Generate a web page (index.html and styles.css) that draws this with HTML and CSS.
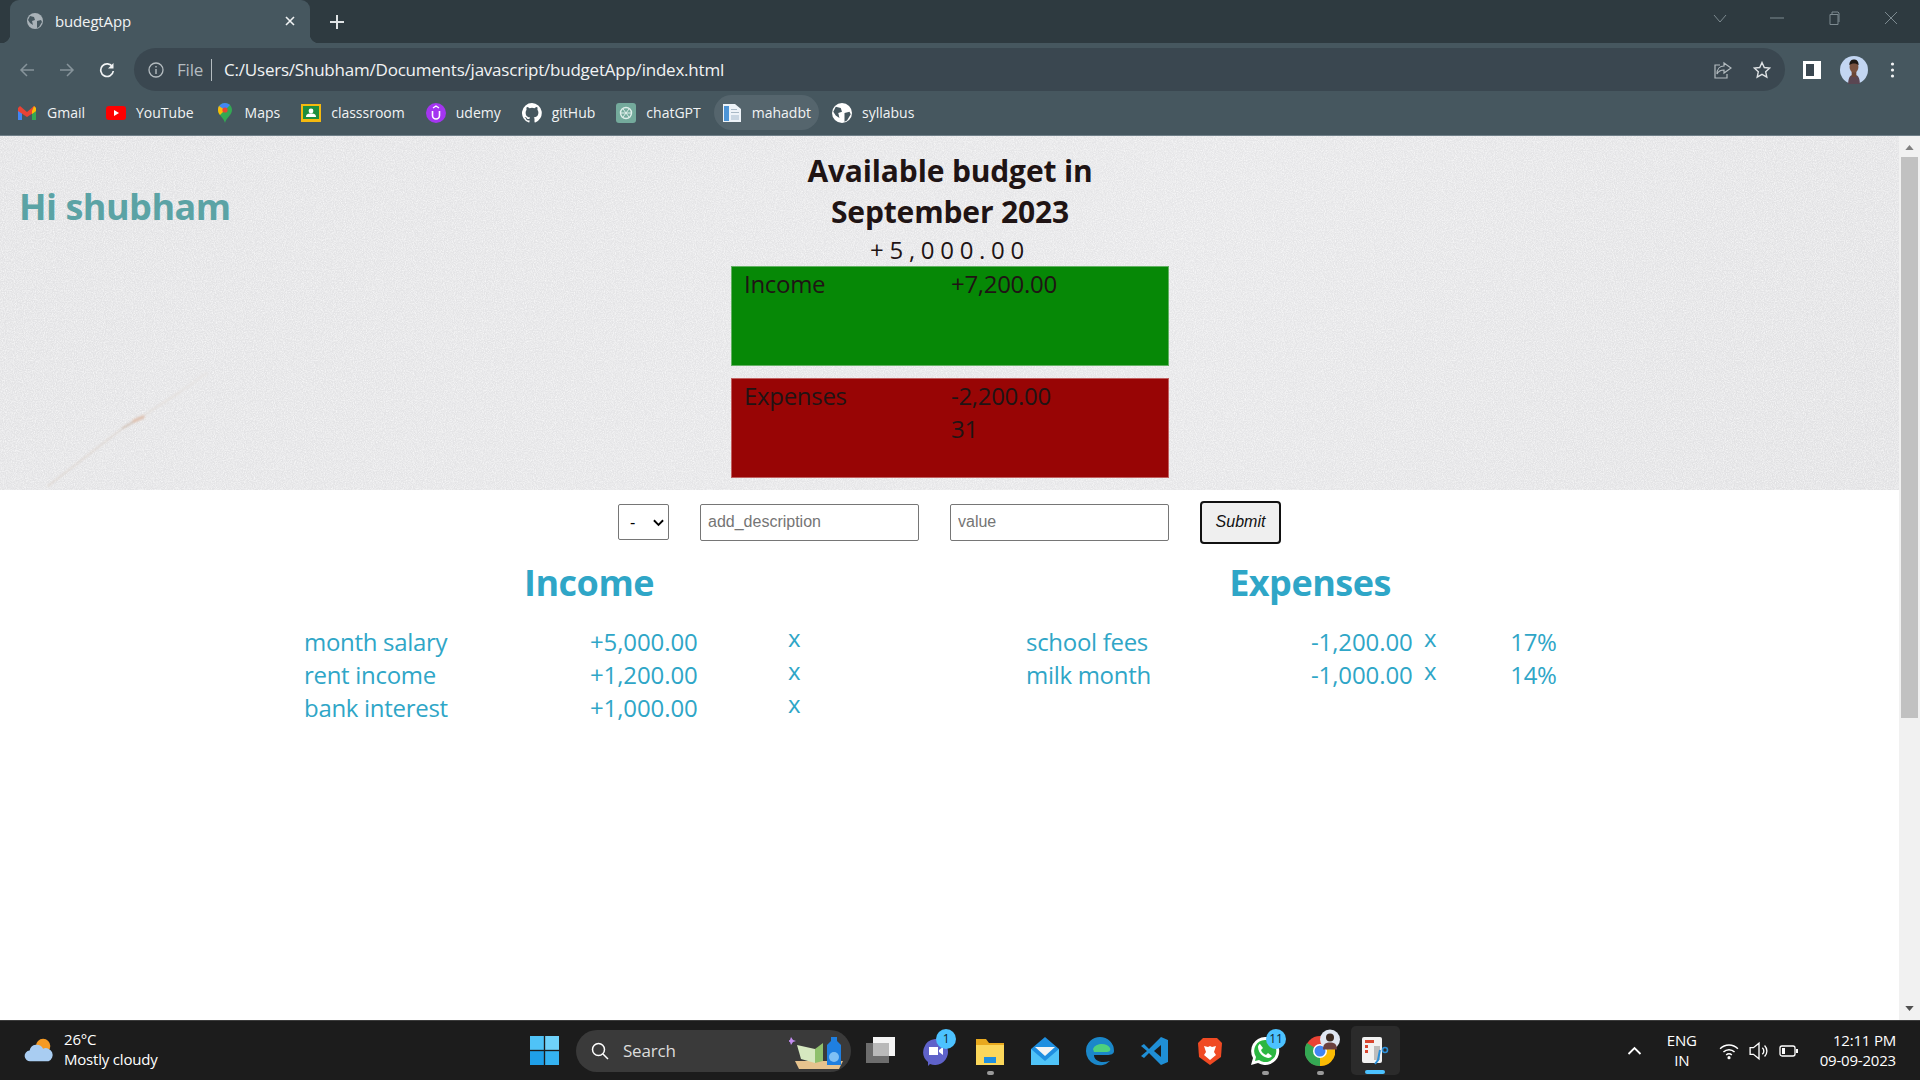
FILE: index.html
```html
<!Doctype html>
<html lang="en">
<head>
	<meta charset="utf-8">
	<title>budegtApp</title>
	<link rel="stylesheet" href="styles.css">
</head>
<body>

<div id="browser">
	<div id="tabstrip">
		<div class="tab">
			<svg class="tab-icon" viewBox="0 0 16 16"><circle cx="8" cy="8" r="8" fill="#a9b2b8"/><path d="M3 3l4 1 1 3-3 1 1 4-3-2-2-3zM10 8l4-1 1 2-3 5-2 1z" fill="#46575f"/></svg>
			<span class="tab-title">budegtApp</span>
			<svg class="tab-close" viewBox="0 0 10 10"><path d="M1 1l8 8M9 1l-8 8" stroke="#f1f3f4" stroke-width="1.6"/></svg>
		</div>
		<svg class="new-tab" viewBox="0 0 14 14"><path d="M7 0v14M0 7h14" stroke="#dfe3e5" stroke-width="2"/></svg>
		<div class="win-controls">
			<svg viewBox="0 0 14 14"><path d="M1 4l6 7 6-7" fill="none" stroke="#7d8a90"/></svg>
			<svg viewBox="0 0 14 14"><path d="M0 7h14" stroke="#7d8a90"/></svg>
			<svg viewBox="0 0 14 14" class="win-max"><path d="M3 3.500h8v10H3zM5 3V1h6l1 1v9" fill="none" stroke="#7d8a90"/></svg>
			<svg viewBox="0 0 14 14"><path d="M1 1l12 12M13 1L1 13" stroke="#7d8a90"/></svg>
		</div>
	</div>

	<div id="toolbar">
		<svg class="nav-icon" viewBox="0 0 16 16"><path d="M15 8H2M8 2L2 8l6 6" fill="none" stroke="#87949b" stroke-width="1.500"/></svg>
		<svg class="nav-icon" viewBox="0 0 16 16"><path d="M1 8h13M8 2l6 6-6 6" fill="none" stroke="#87949b" stroke-width="1.500"/></svg>
		<svg class="nav-icon" viewBox="0 0 16 16"><path d="M13.500 5A6.300 6.300 0 1 0 14.300 9" fill="none" stroke="#f1f3f4" stroke-width="1.700"/><path d="M14.500 1v5.500H9z" fill="#f1f3f4"/></svg>
		<div class="omnibox">
			<svg class="info-icon" viewBox="0 0 16 16"><circle cx="8" cy="8" r="7" fill="none" stroke="#b4bcc0" stroke-width="1.300"/><path d="M8 7v5M8 4v1.600" stroke="#b4bcc0" stroke-width="1.400"/></svg>
			<span class="scheme">File</span>
			<span class="url">C:/Users/Shubham/Documents/javascript/budgetApp/index.html</span>
			<svg class="omni-icon omni-share" viewBox="0 0 18 18"><path d="M10 2l7 5-7 5V9C6 9 4 11 3 13 3 8 6 5 10 5z" fill="none" stroke="#b4bcc0" stroke-width="1.200"/><path d="M6 4H1v13h12v-4" fill="none" stroke="#b4bcc0" stroke-width="1.200"/></svg>
			<svg class="omni-icon" viewBox="0 0 18 18"><path d="M9 1.500l2.300 5 5.400.6-4 3.700 1.100 5.400L9 13.400l-4.800 2.800 1.100-5.400-4-3.700 5.400-.6z" fill="none" stroke="#dfe3e5" stroke-width="1.400"/></svg>
		</div>
		<svg class="side-panel" viewBox="0 0 18 18"><path d="M0 0h18v18H0z" fill="#fff"/><path d="M3 3h8v12H3z" fill="#3a4750"/></svg>
		<svg class="avatar" viewBox="0 0 24 24"><circle cx="12" cy="12" r="12" fill="#c3d6f2"/><path d="M7 24c0-6 2-8 5-8s5 2 5 8z" fill="#5a4652"/><path d="M10 13h4v5h-4z" fill="#6b4636"/><ellipse cx="12" cy="9.500" rx="3.800" ry="4.800" fill="#7a5240"/><path d="M8 8c0-4 2-5 4-5s4 1 4 5c-2-2-6-2-8 0z" fill="#1f1814"/></svg>
		<svg class="menu-dots" viewBox="0 0 4 16"><circle cx="2" cy="2" r="1.600" fill="#f1f3f4"/><circle cx="2" cy="8" r="1.600" fill="#f1f3f4"/><circle cx="2" cy="14" r="1.600" fill="#f1f3f4"/></svg>
	</div>

	<div id="bookmarks">
		<div class="bm">
			<svg viewBox="0 0 20 20"><path d="M1 5v12h4V8z" fill="#4285f4"/><path d="M19 5v12h-4V8z" fill="#34a853"/><path d="M1 5l2-2 7 6 7-6 2 2v3l-9 6-9-6z" fill="#ea4335"/><path d="M15 8l2-5 2 2v3l-4 3z" fill="#fbbc04"/></svg>
			<span>Gmail</span>
		</div>
		<div class="bm">
			<svg viewBox="0 0 20 20"><rect width="20" height="14" y="3" rx="3" fill="#f00"/><path d="M8 7l5 3-5 3z" fill="#fff"/></svg>
			<span>YouTube</span>
		</div>
		<div class="bm">
			<svg viewBox="0 0 16 20"><path d="M8 0c4 0 7 3 7 7 0 5-6 8-7 13C7 15 1 12 1 7c0-4 3-7 7-7z" fill="#34a853"/><path d="M8 0c2 0 4 1 5 2L8 7H1c0-4 3-7 7-7z" fill="#4285f4"/><path d="M2 3l6 4-5 5C2 11 1 9 1 7c0-2 .4-3 1-4z" fill="#fbbc04"/><circle cx="8" cy="7" r="2.600" fill="#ea4335"/></svg>
			<span>Maps</span>
		</div>
		<div class="bm">
			<svg viewBox="0 0 20 20"><rect width="20" height="18" y="1" fill="#f5b90f"/><rect x="2" y="3" width="16" height="13" fill="#1e8e3e"/><circle cx="10" cy="8" r="2.400" fill="#fff"/><path d="M5 14c0-3 2-3.500 5-3.500s5 .5 5 3.500z" fill="#fff"/></svg>
			<span>classsroom</span>
		</div>
		<div class="bm">
			<svg viewBox="0 0 20 20"><circle cx="10" cy="10" r="10" fill="#a435f0"/><path d="M6.500 8v4.500a3.500 3.500 0 0 0 7 0V8" fill="none" stroke="#fff" stroke-width="1.600"/><path d="M7 5l3-2 3 2" fill="none" stroke="#fff" stroke-width="1.400"/></svg>
			<span>udemy</span>
		</div>
		<div class="bm">
			<svg viewBox="0 0 16 16"><path fill="#fff" d="M8 0a8 8 0 0 0-2.500 15.600c.4.100.5-.2.500-.4v-1.400c-2.200.5-2.700-1-2.700-1-.4-.9-.9-1.200-.9-1.200-.7-.5.100-.5.100-.5.800.100 1.200.8 1.200.8.700 1.200 1.900.9 2.300.7.100-.5.300-.9.500-1.100-1.800-.2-3.600-.9-3.600-4 0-.9.300-1.600.8-2.100-.1-.2-.4-1 .1-2.100 0 0 .7-.2 2.200.8a7.600 7.600 0 0 1 4 0c1.500-1 2.200-.8 2.200-.8.400 1.100.2 1.900.1 2.100.5.600.8 1.300.8 2.100 0 3.100-1.900 3.700-3.700 3.900.3.300.6.800.6 1.500v2.200c0 .2.100.5.600.4A8 8 0 0 0 8 0z"/></svg>
			<span>gitHub</span>
		</div>
		<div class="bm">
			<svg viewBox="0 0 20 20"><rect width="20" height="20" rx="3" fill="#74aa9c"/><circle cx="10" cy="10" r="5.500" fill="none" stroke="#dfeeea" stroke-width="1.400"/><path d="M7 6l6 8M13 6l-6 8M4.500 10h11" stroke="#dfeeea"/></svg>
			<span>chatGPT</span>
		</div>
		<div class="bm bm-active">
			<svg viewBox="0 0 20 20"><path d="M1 1h12l6 5v13H1z" fill="#eef3f8"/><path d="M2 3h5v15H2z" fill="#4d94d6"/><path d="M9 12h8v5H9z" fill="#c9d6e2"/><path d="M9 6h6v1H9zM9 9h8v1H9z" fill="#a9b9c6"/></svg>
			<span>mahadbt</span>
		</div>
		<div class="bm">
			<svg viewBox="0 0 16 16"><circle cx="8" cy="8" r="8" fill="#fff"/><path d="M3 3l4 1 1 3-3 1 1 4-3-2-2-3zM10 8l4-1 1 2-3 5-2 1z" fill="#46575f"/></svg>
			<span>syllabus</span>
		</div>
	</div>
</div>

<div id="viewport">
	<div id="page">
		<div id="hero">
			<svg class="marble">
				<defs>
					<filter id="grain"><feTurbulence type="fractalNoise" baseFrequency="0.9" numOctaves="2" seed="4"/><feColorMatrix values="0 0 0 0 1  0 0 0 0 1  0 0 0 0 1  1.300 0 0 0 -0.450"/></filter>
					<filter id="soft"><feGaussianBlur stdDeviation="0.800"/></filter>
				</defs>
				<rect width="100%" height="100%" filter="url(#grain)"/>
				<g filter="url(#soft)" fill="none" stroke-linecap="round">
					<path d="M48 350L123 292" stroke="#dcd3cc" stroke-width="1.300"/>
					<path d="M123 292L140 282" stroke="#cdbbae" stroke-width="1.600"/>
					<path d="M140 282L180 256" stroke="#e3deda" stroke-width="1.500"/>
					<path d="M180 256L207 237" stroke="#e6e3e2" stroke-width="2"/>
					<path d="M134 285L143 281" stroke="#dec1b0" stroke-width="3.500"/>
				</g>
			</svg>
			<h1 class="greeting">Hi shubham</h1>
			<div class="budget">
				<h2 class="budget-title">Available budget in<br>September 2023</h2>
				<div class="budget-value">+5,000.00</div>
				<div class="summary summary-income">
					<span>Income</span>
					<span>+7,200.00</span>
				</div>
				<div class="summary summary-expense">
					<span>Expenses</span>
					<span>-2,200.00<br>31</span>
				</div>
			</div>
		</div>

		<form class="add-form">
			<select class="add-type"><option>-</option></select>
			<input class="add-field" type="text" placeholder="add_description">
			<input class="add-field" type="text" placeholder="value">
			<button class="add-btn" type="button">Submit</button>
		</form>

		<div class="lists">
			<div class="list list-income">
				<h2>Income</h2>
				<div class="row"><span class="desc">month salary</span><span class="amt">+5,000.00</span><span class="del">x</span></div>
				<div class="row"><span class="desc">rent income</span><span class="amt">+1,200.00</span><span class="del">x</span></div>
				<div class="row"><span class="desc">bank interest</span><span class="amt">+1,000.00</span><span class="del">x</span></div>
			</div>
			<div class="list list-expense">
				<h2>Expenses</h2>
				<div class="row"><span class="desc">school fees</span><span class="amt">-1,200.00</span><span class="del">x</span><span class="pct">17%</span></div>
				<div class="row"><span class="desc">milk month</span><span class="amt">-1,000.00</span><span class="del">x</span><span class="pct">14%</span></div>
			</div>
		</div>
	</div>
	<div id="scrollbar">
		<svg viewBox="0 0 10 6" class="arrow"><path d="M5 0l5 6H0z" fill="#808080"/></svg>
		<div class="thumb"></div>
		<svg viewBox="0 0 10 6" class="arrow"><path d="M0 0h10L5 6z" fill="#505050"/></svg>
	</div>
</div>

<div id="taskbar">
	<div class="weather">
		<svg viewBox="0 0 34 30"><circle cx="21" cy="10" r="8" fill="#f59a23"/><path d="M7 27a6 6 0 0 1-1-12 8 8 0 0 1 15-2 7 7 0 0 1 6 14z" fill="#a9cdf2"/></svg>
		<div class="weather-text"><span>26°C</span><span>Mostly cloudy</span></div>
	</div>
	<div class="task-center">
		<svg class="win-logo" viewBox="0 0 30 30"><path d="M0 0h14.300v14.300H0z" fill="#4fc3f7"/><path d="M15.700 0H30v14.300H15.700z" fill="#6fd2fa"/><path d="M0 15.700h14.300V30H0z" fill="#1f9fe8"/><path d="M15.700 15.700H30V30H15.700z" fill="#35b2f0"/></svg>
		<div class="search">
			<svg viewBox="0 0 18 18"><circle cx="7.500" cy="7.500" r="6" fill="none" stroke="#fff" stroke-width="1.500"/><path d="M12 12l5 5" stroke="#fff" stroke-width="1.500"/></svg>
			<span>Search</span>
			<svg class="search-art" viewBox="0 0 60 36"><path d="M6 28h48l-4 8H10z" fill="#e7c38e"/><path d="M8 12l18 4v14L12 26z" fill="#d6e8c0"/><path d="M26 16l8-6v18l-8 2z" fill="#8fc06c"/><path d="M42 4h6v4l4 4v20H38V12l4-4z" fill="#1f7fe0"/><circle cx="45" cy="24" r="5" fill="#7fc0f5"/><path d="M2 4l2 3 3 1-3 1-2 3-1-3-3-1 3-1z" fill="#c38cf0"/></svg>
		</div>
		<svg class="task-icon task-first" viewBox="0 0 30 30"><rect x="8" y="1" width="22" height="19" fill="#f4f4f4"/><rect x="1" y="7" width="23" height="20" fill="#6d6d6d"/><rect x="8" y="7" width="16" height="13" fill="#b9b9b9"/></svg>
		<div class="task-slot">
			<svg class="task-icon" viewBox="0 0 30 30"><path d="M15 3a13 13 0 1 1-5 25l-2 2v-4A13 13 0 0 1 15 3z" fill="#5f62c9"/><path d="M9 11h9v8H9zM19 14l4-3v8l-4-3z" fill="#fff"/></svg>
			<span class="badge">1</span>
		</div>
		<div class="task-slot">
			<svg class="task-icon" viewBox="0 0 30 30"><path d="M1 3h10l3 4h15v5H1z" fill="#e8a91e"/><path d="M1 9h28v20H1z" fill="#fbd75b"/><path d="M9 21h12v6H9z" fill="#1f8fe0"/></svg>
			<span class="pip"></span>
		</div>
		<svg class="task-icon" viewBox="0 0 30 30"><path d="M15 1l14 12v16H1V13z" fill="#1f8fe0"/><path d="M1 13l14 12 14-12v16H1z" fill="#4fc3f7"/><path d="M5 11h20l-10 9z" fill="#f4f4f4"/></svg>
		<svg class="task-icon" viewBox="0 0 30 30"><path d="M15 1a14 14 0 0 1 14 14c0 3-3 4-7 4H9c0 5 6 9 16 6a14 14 0 0 1-24-10A14 14 0 0 1 15 1z" fill="#1b87c9"/><path d="M8 13c2-6 14-7 17-1 1 3-1 4-4 4H9z" fill="#4ed07e"/></svg>
		<svg class="task-icon" viewBox="0 0 30 30"><path d="M21 1l7 3v22l-7 3L9 17l-5 5-3-2 6-5-6-5 3-2 5 5z" fill="#1f8fd6"/><path d="M21 9l-7 6 7 6z" fill="#1c1c1c"/></svg>
		<svg class="task-icon" viewBox="0 0 30 30"><path d="M8 2h14l5 5-1 14-11 8-11-8L3 7z" fill="#f04a23"/><path d="M9 10l4 1 2-1 2 1 4-1-2 6 2 3-6 5-6-5 2-3z" fill="#fff"/></svg>
		<div class="task-slot">
			<svg class="task-icon" viewBox="0 0 30 30"><path d="M15 1a14 14 0 1 1-7 26l-7 2 2-7A14 14 0 0 1 15 1z" fill="#fff"/><path d="M15 4a11 11 0 1 1-6 20l-4 1 1-4A11 11 0 0 1 15 4z" fill="#2bb741"/><path d="M10 8l3 4-2 2c1 3 3 4 5 5l2-2 4 3c-2 3-6 2-9 0s-5-6-5-9c0-1 1-3 2-3z" fill="#fff"/></svg>
			<span class="badge">11</span>
			<span class="pip"></span>
		</div>
		<div class="task-slot">
			<svg class="task-icon" viewBox="0 0 30 30"><circle cx="15" cy="15" r="15" fill="#ea4335"/><path d="M15 15L2 7A15 15 0 0 0 15 30z" fill="#34a853"/><path d="M15 15l13-8a15 15 0 0 1-13 23z" fill="#fbbc04"/><circle cx="15" cy="15" r="7" fill="#fff"/><circle cx="15" cy="15" r="5.500" fill="#4285f4"/></svg>
			<svg class="chrome-avatar" viewBox="0 0 20 20"><circle cx="10" cy="10" r="10" fill="#dfe6f2"/><circle cx="10" cy="8" r="4" fill="#3a2a22"/><path d="M3 20c0-6 3-7 7-7s7 1 7 7z" fill="#6b4040"/></svg>
			<span class="pip"></span>
		</div>
		<div class="task-slot task-active">
			<svg class="task-icon" viewBox="0 0 30 30"><rect x="2" y="1" width="20" height="26" rx="2" fill="#f2f2f2"/><path d="M5 4h9v3H5zM5 9h3v3H5zM5 14h3v3H5z" fill="#d9452f"/><path d="M14 10h6v14h-6z" fill="#bdbdbd"/><path d="M20 14l-2 10-3 4" fill="none" stroke="#2a8fd8" stroke-width="2"/><circle cx="25" cy="14" r="2.500" fill="none" stroke="#2a8fd8" stroke-width="1.600"/></svg>
			<span class="pip pip-active"></span>
		</div>
	</div>
	<div class="tray">
		<svg class="tray-up" viewBox="0 0 14 9"><path d="M1 8l6-6 6 6" fill="none" stroke="#fff" stroke-width="1.800"/></svg>
		<div class="lang"><span>ENG</span><span>IN</span></div>
		<svg class="tray-icon" viewBox="0 0 18 18"><path d="M1 7a11 11 0 0 1 16 0M4 10a7 7 0 0 1 10 0M6.500 12.500a3.500 3.500 0 0 1 5 0" fill="none" stroke="#fff" stroke-width="1.300"/><circle cx="9" cy="15" r="1.400" fill="#fff"/></svg>
		<svg class="tray-icon" viewBox="0 0 18 18"><path d="M1 6h3l5-4v14l-5-4H1z" fill="none" stroke="#fff" stroke-width="1.200"/><path d="M12 6a4 4 0 0 1 0 6M14 4a7 7 0 0 1 0 10" fill="none" stroke="#fff" stroke-width="1.200"/></svg>
		<svg class="tray-icon" viewBox="0 0 20 18"><rect x="1" y="4" width="15" height="10" rx="2" fill="none" stroke="#fff" stroke-width="1.300"/><rect x="3" y="6" width="3" height="6" fill="#fff"/><path d="M18 7v4" stroke="#fff" stroke-width="2"/></svg>
		<div class="clock"><span>12:11 PM</span><span>09-09-2023</span></div>
	</div>
</div>

</body>
</html>
```

FILE: styles.css
```css
html, body {
	margin: 0;
	height: 1080px;
	overflow: hidden;
	background: #fff;
}

body {
	display: flex;
	flex-direction: column;
	font-family: "Open Sans", "Noto Sans", sans-serif;
}

/* browser chrome */

#browser {
	flex: none;
	color: #f1f3f4;
}

#tabstrip {
	height: 43px;
	background: #2e3a40;
	display: flex;
	align-items: flex-end;
	padding-left: 10px;
}

.tab {
	position: relative;
	width: 300px;
	height: 43px;
	box-sizing: border-box;
	background: #46575f;
	border-radius: 9px 9px 0 0;
	display: flex;
	align-items: center;
	padding: 0 15px 2px 17px;
	gap: 12px;
	font-size: 15px;
	letter-spacing: -0.15px;
}

.tab:before, .tab:after {
	content: "";
	position: absolute;
	bottom: 0;
	width: 9px;
	height: 9px;
}

.tab:before {
	left: -9px;
	background: radial-gradient(circle at 0 0, #2e3a40 9px, #46575f 9.500px);
}

.tab:after {
	right: -9px;
	background: radial-gradient(circle at 100% 0, #2e3a40 9px, #46575f 9.500px);
}

.tab-icon {
	width: 16px;
	height: 16px;
}

.tab-title {
	flex: 1;
}

.tab-close {
	width: 10px;
	height: 10px;
}

.new-tab {
	width: 14px;
	height: 14px;
	margin: 0 0 14px 20px;
}

.win-controls {
	margin-left: auto;
	height: 43px;
	display: flex;
	align-items: center;
	gap: 43px;
	padding-right: 22px;
}

.win-controls svg {
	width: 14px;
	height: 14px;
	margin-bottom: 7px;
}

#toolbar {
	height: 48px;
	box-sizing: border-box;
	background: #46575f;
	display: flex;
	align-items: center;
	padding: 5px 0 0 19px;
}

.nav-icon {
	width: 16px;
	height: 16px;
	margin-right: 24px;
}

.nav-icon:nth-child(3) {
	margin-right: 19px;
}

.omnibox {
	width: 1651px;
	height: 43px;
	box-sizing: border-box;
	background: #3a4750;
	border-radius: 22px;
	display: flex;
	align-items: center;
	padding: 0 14px 0 14px;
}

.info-icon {
	width: 16px;
	height: 16px;
	margin-right: 13px;
}

.scheme {
	color: #b4bcc0;
	font-size: 17px;
	letter-spacing: -0.2px;
	padding-right: 8px;
	border-right: 1px solid #b4bcc0;
	margin-right: 12px;
	line-height: 22px;
}

.url {
	flex: 1;
	font-size: 17px;
	letter-spacing: -0.22px;
}

.omni-icon {
	width: 18px;
	height: 18px;
	margin-left: 22px;
}

.omni-share {
	margin-right: -1px;
}

.side-panel {
	width: 18px;
	height: 18px;
	margin-left: 18px;
}

.avatar {
	width: 28px;
	height: 28px;
	margin-left: 19px;
}

.menu-dots {
	width: 5px;
	height: 16px;
	margin-left: 22px;
}

#bookmarks {
	height: 45px;
	box-sizing: border-box;
	background: #46575f;
	border-bottom: 1px solid #6f7f88;
	display: flex;
	align-items: center;
	gap: 5px;
	padding: 0 0 1px 9px;
}

.bm {
	height: 35px;
	box-sizing: border-box;
	display: flex;
	align-items: center;
	gap: 10px;
	padding: 0 8px;
	border-radius: 18px;
	font-size: 14px;
}

.bm span {
	margin-top: -1px;
}

.bm svg {
	width: 20px;
	height: 20px;
}

.bm-active {
	background: #55656d;
}

/* page */

#viewport {
	flex: 1;
	display: flex;
	min-height: 0;
}

#page {
	flex: 1;
	min-width: 0;
}

#hero {
	position: relative;
	height: 354px;
	background: linear-gradient(120deg, #e2e2e4, #e6e6e8 60%, #e1e1e3);
	display: grid;
	grid-template-columns: 731px 438px 1fr;
	justify-items: start;
}

.marble {
	position: absolute;
	left: 0;
	top: 0;
	width: 100%;
	height: 100%;
}

.greeting {
	position: relative;
	margin: 46px 0 0 19px;
	font-size: 36px;
	line-height: 50px;
	color: #5ba3a5;
	letter-spacing: -0.5px;
	font-weight: 700;
}

.budget {
	position: relative;
	grid-column: 2;
	width: 100%;
	text-align: center;
	color: #1f1414;
}

.budget-title {
	margin: 14px 0 0;
	font-size: 30px;
	line-height: 41px;
	letter-spacing: -0.15px;
	font-weight: 700;
}

.budget-value {
	margin-top: 2px;
	font-size: 24px;
	line-height: 32px;
	letter-spacing: 5.700px;
}

.summary {
	height: 100px;
	box-sizing: border-box;
	display: grid;
	grid-template-columns: 207px 1fr;
	padding-left: 12px;
	margin-bottom: 12px;
	text-align: left;
	font-size: 24px;
	line-height: 33px;
	letter-spacing: -0.3px;
	border: 1px solid #63b063;
}

.summary-income {
	background: #068806;
}

.summary-expense {
	background: #980505;
	border-color: #c06060;
	margin-bottom: 0;
}

.add-form {
	display: flex;
	align-items: center;
	height: 64px;
	padding-left: 618px;
}

.add-type {
	appearance: none;
	width: 51px;
	height: 36px;
	margin-right: 31px;
	padding-left: 11px;
	background: #fff url("data:image/svg+xml,%3Csvg xmlns='http://www.w3.org/2000/svg' viewBox='0 0 12 8'%3E%3Cpath d='M1 1l5 5 5-5' fill='none' stroke='black' stroke-width='2'/%3E%3C/svg%3E") no-repeat 34px 14px / 11px 8px;
	border: 1px solid #767676;
	border-radius: 2px;
	font-family: "Liberation Sans", sans-serif;
	font-size: 16px;
}

.add-field {
	width: 219px;
	height: 37px;
	box-sizing: border-box;
	margin-right: 31px;
	padding: 0 7px;
	border: 1px solid #767676;
	border-radius: 2px;
	font-family: "Liberation Sans", sans-serif;
	font-size: 16px;
}

.add-btn {
	width: 81px;
	height: 43px;
	background: #efefef;
	border: 2px solid #111;
	border-radius: 4px;
	font-family: "Liberation Sans", sans-serif;
	font-size: 16px;
	font-style: italic;
	color: #111;
}

.lists {
	display: grid;
	grid-template-columns: 722px 600px;
	padding: 4px 0 0 304px;
	color: #2fa6c7;
}

.list h2 {
	width: 570px;
	margin: 0 0 17px;
	font-size: 36px;
	line-height: 50px;
	letter-spacing: -0.5px;
	font-weight: 700;
	text-align: center;
}

.list-expense h2 {
	margin-left: -1px;
}

.row {
	display: flex;
	font-size: 24px;
	line-height: 33px;
	letter-spacing: -0.3px;
}

.desc {
	width: 286px;
}

.amt {
	width: 106px;
	white-space: nowrap;
	letter-spacing: -0.1px;
}

.list-income .amt {
	margin-right: 92px;
}

.list-expense .desc {
	margin-right: -1px;
}

.list-expense .amt {
	margin-right: 7px;
}

.del {
	font-size: 24px;
	line-height: 25px;
}

.pct {
	margin-left: 74px;
}

#scrollbar {
	flex: none;
	width: 21px;
	box-sizing: border-box;
	padding: 9px 2px;
	background: #f1f1f1;
	display: flex;
	flex-direction: column;
	align-items: center;
}

.arrow {
	flex: none;
	width: 9px;
	height: 5px;
}

.thumb {
	flex: none;
	width: 17px;
	height: 561px;
	margin: 7px 0 auto;
	background: #c1c1c1;
}

/* windows taskbar */

#taskbar {
	flex: none;
	height: 60px;
	box-sizing: border-box;
	background: #1c1c1c;
	border-top: 1px solid #3b3b3b;
	display: flex;
	align-items: center;
	color: #fff;
	font-size: 15px;
	letter-spacing: -0.2px;
}

.weather {
	width: 530px;
	display: flex;
	align-items: center;
	padding: 0 0 4px 24px;
	box-sizing: border-box;
	gap: 9px;
	line-height: 20px;
}

.weather svg {
	width: 31px;
	height: 27px;
	margin-top: 4px;
}

.weather-text {
	display: flex;
	flex-direction: column;
}

.task-center {
	display: flex;
	align-items: center;
}

.task-icon {
	width: 30px;
	height: 30px;
	margin-left: 25px;
	display: block;
}

.task-first {
	margin-left: 14px;
}

.win-logo {
	width: 29px;
	height: 29px;
	margin-right: 17px;
}

.search {
	width: 275px;
	height: 42px;
	box-sizing: border-box;
	background: #3a3a3a;
	border-radius: 21px;
	display: flex;
	align-items: center;
	padding: 0 2px 0 15px;
	gap: 14px;
	font-size: 17px;
	color: #dcdcdc;
}

.search svg {
	width: 18px;
	height: 18px;
}

.search .search-art {
	width: 60px;
	height: 36px;
	margin-left: auto;
}

.task-slot {
	position: relative;
	height: 59px;
	display: flex;
	align-items: center;
}

.badge {
	position: absolute;
	right: -6px;
	top: 8px;
	min-width: 20px;
	height: 20px;
	border-radius: 10px;
	background: #4cc2ff;
	color: #10232c;
	font-size: 12px;
	line-height: 20px;
	text-align: center;
}

.pip {
	position: absolute;
	left: 37px;
	bottom: 5px;
	width: 7px;
	height: 4px;
	border-radius: 2px;
	background: #9a9a9a;
}

.task-active {
	width: 49px;
	height: 49px;
	margin-left: 16px;
	background: #2b2b2b;
	border-radius: 5px;
}

.task-active .task-icon {
	margin-left: 9px;
}

.task-active .pip-active {
	left: 14px;
	bottom: 1px;
	width: 20px;
	background: #4cc2ff;
}

.chrome-avatar {
	position: absolute;
	right: -5px;
	top: 8px;
	width: 20px;
	height: 21px;
}

.tray {
	margin-left: auto;
	display: flex;
	align-items: center;
	padding: 0 24px 2px 0;
}

.tray-up {
	width: 15px;
	height: 9px;
	margin: 2px 25px 0 0;
}

.lang {
	display: flex;
	flex-direction: column;
	align-items: center;
	line-height: 20px;
	margin-right: 22px;
}

.tray-icon {
	width: 20px;
	height: 20px;
	margin: 2px 10px 0 0;
}

.clock {
	display: flex;
	flex-direction: column;
	align-items: flex-end;
	line-height: 20px;
	margin-left: 11px;
}
```
